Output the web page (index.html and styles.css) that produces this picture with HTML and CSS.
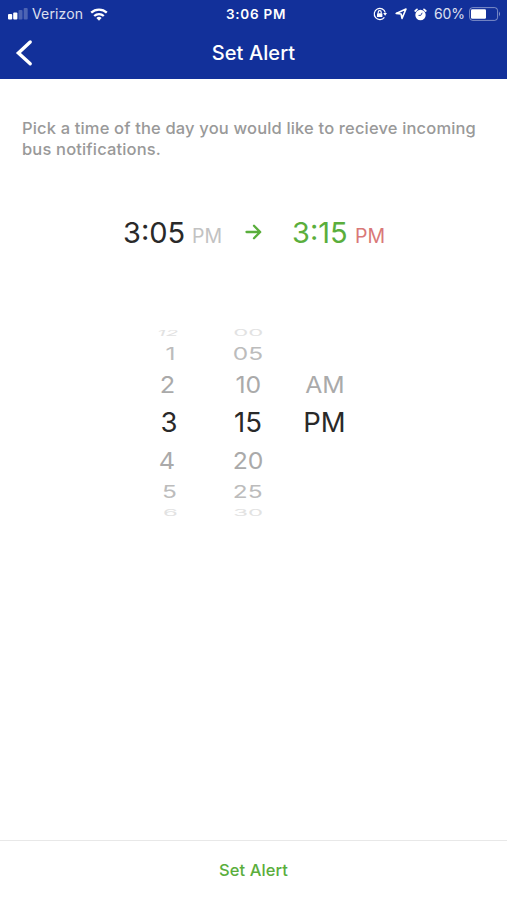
FILE: index.html
```html
<!DOCTYPE html>
<html lang="en">
<head>
  <meta charset="UTF-8">
  <title>Set Alert</title>
  <link rel="stylesheet" href="styles.css">
</head>
<body>

<!-- Header -->
<header class="header">
  <div class="status-bar">
    <div class="status-left">
      <svg class="signal" width="20" height="12" viewBox="0 0 20 12" fill="#fff">
        <rect x="0" y="6" width="4.2" height="5.5" rx="1"/>
        <rect x="5.2" y="4.5" width="4.2" height="7" rx="1"/>
        <rect x="10.5" y="2" width="4" height="9.5" rx="1" opacity=".25"/>
        <rect x="15.7" y="0" width="4" height="11.5" rx="1" opacity=".25"/>
      </svg>
      <span class="carrier">Verizon</span>
      <svg class="wifi" width="18" height="13" viewBox="0 0 18 13" fill="none" stroke="#fff" stroke-width="2.3">
        <path d="M1.2 4.7a11.2 11.2 0 0 1 15.6 0"/>
        <path d="M4.2 8a7 7 0 0 1 9.6 0"/>
        <path d="M9 12.7L6.4 10a3.8 3.8 0 0 1 5.2 0z" fill="#fff" stroke="none"/>
      </svg>
    </div>
    <span class="clock">3:06 PM</span>
    <div class="status-right">
      <svg width="14" height="14" viewBox="0 0 14 14" fill="none" stroke="#fff" stroke-width="1.2">
        <path d="M11.4 10.3A5.6 5.6 0 1 1 12.3 5.6"/>
        <path d="M10.2 6h3.8l-1.9 2.8z" fill="#fff" stroke="none"/>
        <path d="M5.2 6.5V5.2a1.5 1.5 0 0 1 3 0v1.3"/>
        <rect x="4" y="6.2" width="5.4" height="3.9" rx=".6" fill="#fff" stroke="none"/>
      </svg>
      <svg class="location" width="12" height="12" viewBox="0 0 12 12" fill="none" stroke="#fff" stroke-width="1.6" stroke-linejoin="round">
        <path d="M11 1L7 10.4 6.1 6 1.2 5.4z"/>
      </svg>
      <svg class="alarm" width="13" height="13" viewBox="0 0 13 13">
        <circle cx="6.5" cy="7" r="5.2" fill="#fff"/>
        <path d="M1.2 3l1.8-1.6M11.8 3L10 1.4" stroke="#fff" stroke-width="1.7" stroke-linecap="round"/>
        <path d="M8.2 4.8L6.7 7.4H4.5" fill="none" stroke="#12309a" stroke-width=".9"/>
      </svg>
      <span class="percent">60%</span>
      <svg class="battery" width="32" height="14" viewBox="0 0 32 14">
        <rect x=".6" y=".6" width="28" height="12.8" rx="3" fill="none" stroke="#fff" stroke-opacity=".45"/>
        <rect x="2" y="2.2" width="15" height="9.6" rx="1.2" fill="#fff"/>
        <path d="M30 4.6q2 2.4 0 4.8z" fill="#fff" fill-opacity=".5"/>
      </svg>
    </div>
  </div>
  <div class="nav-bar">
    <svg class="back" width="18" height="28" viewBox="0 0 18 28" fill="none" stroke="#fff" stroke-width="3.4" stroke-linecap="round">
      <path d="M15.2 3L3.4 14l11.8 10.8"/>
    </svg>
    <h1 class="title">Set Alert</h1>
  </div>
</header>

<main class="content">
  <p class="hint">Pick a time of the day you would like to recieve incoming<br>bus notifications.</p>

  <!-- Time range -->
  <div class="range">
    <span class="time">3:05</span>
    <span class="period">PM</span>
    <svg class="arrow" width="17" height="16" viewBox="0 0 17 16" fill="none" stroke="#5aae3c" stroke-width="2.3" stroke-linecap="round" stroke-linejoin="round">
      <path d="M1.5 8h13.5M9 1.8L15.2 8 9 14.2"/>
    </svg>
    <span class="time time-end">3:15</span>
    <span class="period period-end">PM</span>
  </div>

  <!-- Wheel picker -->
  <div class="picker">
    <div class="wheel hours">
      <div class="row edge slant"><span>12</span></div>
      <div class="row far one"><span>1</span></div>
      <div class="row near"><span>2</span></div>
      <div class="row selected"><span>3</span></div>
      <div class="row near"><span>4</span></div>
      <div class="row far"><span>5</span></div>
      <div class="row edge"><span>6</span></div>
    </div>
    <div class="wheel minutes">
      <div class="row edge"><span>00</span></div>
      <div class="row far"><span>05</span></div>
      <div class="row near"><span>10</span></div>
      <div class="row selected"><span>15</span></div>
      <div class="row near"><span>20</span></div>
      <div class="row far"><span>25</span></div>
      <div class="row edge"><span>30</span></div>
    </div>
    <div class="wheel periods">
      <div class="row edge"></div>
      <div class="row far"></div>
      <div class="row near"><span>AM</span></div>
      <div class="row selected"><span>PM</span></div>
      <div class="row near"></div>
      <div class="row far"></div>
      <div class="row edge"></div>
    </div>
  </div>
</main>

<footer class="footer">
  <span class="save">Set Alert</span>
</footer>

</body>
</html>
```

FILE: styles.css
```css
html, body {
  margin: 0;
  padding: 0;
  height: 100%;
  overflow: hidden;
}

body {
  display: flex;
  flex-direction: column;
  background: #fff;
  font-family: Inter, "Liberation Sans", sans-serif;
}

svg {
  display: block;
  flex: none;
}

.header {
  height: 79px;
  flex: none;
  background: #12309a;
  color: #fff;
}

.status-bar {
  display: grid;
  grid-template-columns: 1fr auto 1fr;
  align-items: center;
  height: 27px;
  padding: 0 6px 0 8px;
  font-size: 14px;
  line-height: 28px;
}

.status-left,
.status-right {
  display: flex;
  align-items: center;
}

.status-right {
  justify-content: flex-end;
}

.carrier {
  margin-left: 4px;
  letter-spacing: 0.15px;
  opacity: 0.85;
}

.wifi {
  margin-left: 7px;
}

.clock {
  margin-left: 3px;
  font-size: 13.5px;
  font-weight: 600;
  letter-spacing: 0.75px;
}

.location {
  margin-left: 8px;
}

.alarm {
  margin-left: 7px;
}

.percent {
  margin-left: 7px;
  letter-spacing: -0.1px;
  opacity: 0.85;
}

.battery {
  margin-left: 4px;
}

.nav-bar {
  display: grid;
  grid-template-columns: 1fr auto 1fr;
  align-items: center;
  height: 51px;
}

.back {
  margin-left: 15px;
}

.title {
  margin: 0;
  font-size: 20px;
  font-weight: 500;
  letter-spacing: 0.1px;
  line-height: 24px;
}

.content {
  flex: 1;
}

.hint {
  margin: 39px 22px 0;
  color: #999;
  font-size: 16.5px;
  font-weight: 500;
  letter-spacing: 0.16px;
  line-height: 20.5px;
  white-space: nowrap;
}

.range {
  display: flex;
  align-items: baseline;
  margin: 54px 0 0 123px;
  height: 40px;
  line-height: 40px;
}

.time {
  width: 69px;
  color: #292929;
  font-size: 29px;
}

.period {
  width: 53px;
  color: #c2c2c2;
  font-size: 19.5px;
}

.arrow {
  align-self: center;
  width: 17px;
  margin: -2px 30px 0 0;
}

.time-end {
  width: 63px;
  color: #5aae3c;
}

.period-end {
  color: #d97878;
}

.picker {
  display: flex;
  margin: 70px 0 0 139px;
  color: #292929;
  font-size: 27.5px;
}

.wheel {
  width: 60px;
}

.minutes {
  width: 98px;
}

.periods {
  width: 55px;
}

.row {
  display: flex;
  align-items: center;
  justify-content: center;
}

.row span {
  line-height: 1;
}

.selected {
  height: 36px;
}

.near {
  height: 40px;
  color: #aaa;
}

.near span {
  transform: scale(0.9, 0.84);
}

.far {
  height: 22px;
  color: #bcbcbc;
}

.far span {
  transform: scale(0.89, 0.64);
}

.edge {
  height: 20px;
  color: #e2e2e2;
}

.edge span {
  transform: scale(0.87, 0.3);
}

.hours .near span {
  transform: translateX(-2px) scale(0.92, 0.84);
}

.hours .edge span {
  transform: translateX(2px) scale(0.87, 0.3);
}

.hours .one span {
  transform: translateX(2px) scale(0.89, 0.64);
}

.hours .slant span {
  transform: translateX(-1px) skewX(-20deg) scale(0.76, 0.3);
}

.footer {
  display: flex;
  justify-content: center;
  height: 59px;
  flex: none;
  border-top: 1px solid #e8e8e8;
}

.save {
  color: #5aae3c;
  font-size: 16.5px;
  font-weight: 500;
  letter-spacing: 0.1px;
  line-height: 59px;
}
```
